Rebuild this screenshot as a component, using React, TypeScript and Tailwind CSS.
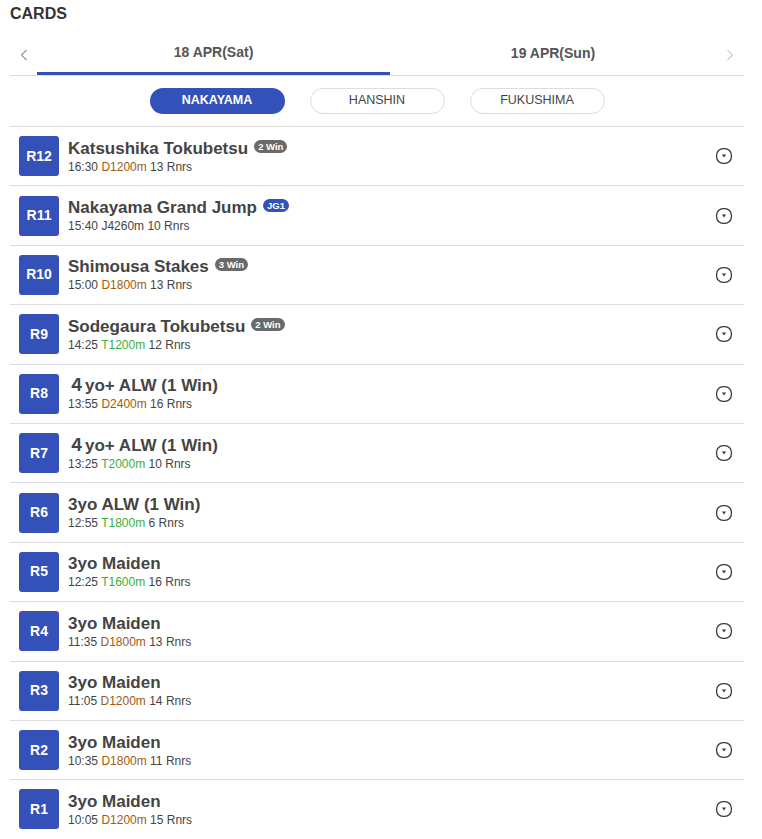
import React, { useState } from 'react';

type Race = {
  no: number;
  name: string;
  grade?: { label: string; kind: 'win' | 'g' };
  time: string;
  dist: string;
  runners: number;
};

const races: Race[] = [
  { no: 12, name: 'Katsushika Tokubetsu', grade: { label: '2 Win', kind: 'win' }, time: '16:30', dist: 'D1200m', runners: 13 },
  { no: 11, name: 'Nakayama Grand Jump', grade: { label: 'JG1', kind: 'g' }, time: '15:40', dist: 'J4260m', runners: 10 },
  { no: 10, name: 'Shimousa Stakes', grade: { label: '3 Win', kind: 'win' }, time: '15:00', dist: 'D1800m', runners: 13 },
  { no: 9, name: 'Sodegaura Tokubetsu', grade: { label: '2 Win', kind: 'win' }, time: '14:25', dist: 'T1200m', runners: 12 },
  { no: 8, name: '４yo+ ALW (1 Win)', time: '13:55', dist: 'D2400m', runners: 16 },
  { no: 7, name: '４yo+ ALW (1 Win)', time: '13:25', dist: 'T2000m', runners: 10 },
  { no: 6, name: '3yo ALW (1 Win)', time: '12:55', dist: 'T1800m', runners: 6 },
  { no: 5, name: '3yo Maiden', time: '12:25', dist: 'T1600m', runners: 16 },
  { no: 4, name: '3yo Maiden', time: '11:35', dist: 'D1800m', runners: 13 },
  { no: 3, name: '3yo Maiden', time: '11:05', dist: 'D1200m', runners: 14 },
  { no: 2, name: '3yo Maiden', time: '10:35', dist: 'D1800m', runners: 11 },
  { no: 1, name: '3yo Maiden', time: '10:05', dist: 'D1200m', runners: 15 }
];

const venues = ['NAKAYAMA', 'HANSHIN', 'FUKUSHIMA'];

function distColor(d: string) {
  if (d.startsWith('D')) return 'text-[#a05a12]';
  if (d.startsWith('T')) return 'text-[#3cae3c]';
  return 'text-[#444]';
}

function ExpandIcon() {
  return (
    <svg width="18" height="18" viewBox="0 0 18 18" fill="none">
      <rect x="1.6" y="1.6" width="14.8" height="14.8" rx="6.6" stroke="#3a3a3a" strokeWidth="1.3" />
      <path d="M6.9 7.6 L11.1 7.6 L9 10.6 Z" fill="#3a3a3a" />
    </svg>
  );
}

export default function App() {
  const [venue, setVenue] = useState('NAKAYAMA');
  const [day, setDay] = useState(0);

  return (
    <div className="w-[762px] bg-white px-[10px] pt-[4px] font-['Liberation_Sans','Noto_Sans_CJK_JP',sans-serif] text-[#444]">
      {/* Header */}
      <h1 className="text-[16px] font-bold leading-[20px] text-[#333]">CARDS</h1>

      {/* Day tabs */}
      <div className="mt-[11px] flex h-[41px] w-[734px] items-stretch border-b border-[#ddd]">
        <button className="flex w-[27px] items-center justify-center">
          <svg width="8" height="12" viewBox="0 0 8 12" fill="none">
            <path d="M6.5 1 L1.5 6 L6.5 11" stroke="#999" strokeWidth="1.2" />
          </svg>
        </button>
        {['18 APR(Sat)', '19 APR(Sun)'].map((d, i) => (
          <button
            key={d}
            onClick={() => setDay(i)}
            className={
              'flex items-center justify-center pb-[3px] text-[14px] font-bold text-[#555] ' +
              (i === 0 ? 'w-[353px] ' : 'w-[326px] ') +
              (day === i ? 'border-b-[3px] border-[#3450b9]' : '')
            }
          >
            {d}
          </button>
        ))}
        <button className="flex flex-1 items-center justify-center">
          <svg width="8" height="12" viewBox="0 0 8 12" fill="none">
            <path d="M1.5 1 L6.5 6 L1.5 11" stroke="#ccc" strokeWidth="1.2" />
          </svg>
        </button>
      </div>

      {/* Venue pills */}
      <div className="flex h-[51px] w-[734px] items-center justify-center gap-[25px] border-b border-[#ddd] pb-[1px]">
        {venues.map(v => (
          <button
            key={v}
            onClick={() => setVenue(v)}
            className={
              'h-[26px] w-[135px] rounded-full text-[12.5px] ' +
              (venue === v
                ? 'bg-[#3450b9] font-bold text-white'
                : 'border border-[#ddd] bg-white text-[#444]')
            }
          >
            {v}
          </button>
        ))}
      </div>

      {/* Race list */}
      <div className="w-[734px]">
        {races.map(r => (
          <div key={r.no} className="flex h-[59.4px] items-center border-b border-[#ddd] pl-[9px] pr-[11px]">
            <div className="flex h-[40px] w-[40px] shrink-0 items-center justify-center rounded-[3px] bg-[#3450b9] text-[14px] font-bold text-white">
              R{r.no}
            </div>
            <div className="ml-[9px] flex-1">
              <div className="flex items-center gap-[6px] text-[17px] font-bold leading-[19px] text-[#444]">
                <span>{r.name}</span>
                {r.grade && (
                  <span
                    className={
                      'mt-[-4px] rounded-full px-[4px] text-[9.5px] font-bold leading-[13px] text-white ' +
                      (r.grade.kind === 'win' ? 'bg-[#6a6a6a]' : 'bg-[#3450b9]')
                    }
                  >
                    {r.grade.label}
                  </span>
                )}
              </div>
              <div className="mt-[2px] text-[12px] leading-[14px] text-[#444]">
                {r.time} <span className={distColor(r.dist)}>{r.dist}</span> {r.runners} Rnrs
              </div>
            </div>
            <ExpandIcon />
          </div>
        ))}
      </div>
    </div>
  );
}
